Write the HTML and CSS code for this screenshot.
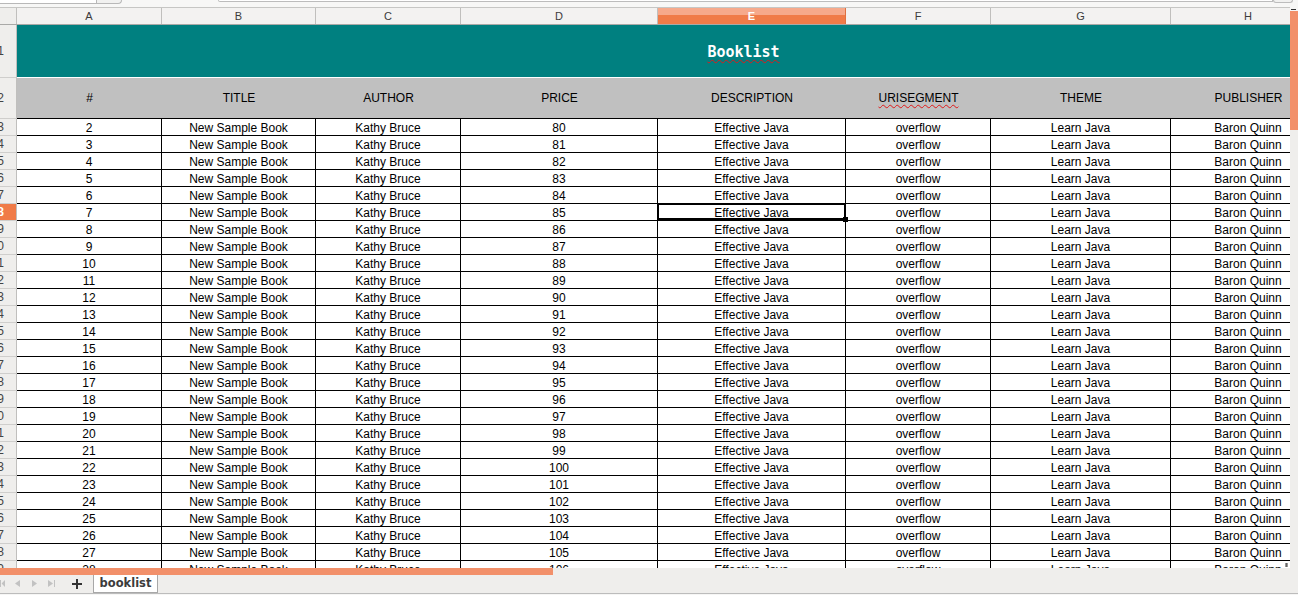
FILE: index.html
```html
<!DOCTYPE html>
<html>
<head>
<meta charset="utf-8">
<title>booklist</title>
<link rel="stylesheet" href="styles.css">
</head>
<body>
<div class="app">
  <div class="strip">
    <div class="namebox"></div>
    <div class="namebtn"></div>
    <div class="strip-gap"></div>
    <div class="formula"></div>
    <div class="formbtn"></div>
  </div>
  <div class="sheet">
    <div class="viewport">
      <div class="grid">
        <div class="colhead">
          <div class="corner"></div>
          <div class="ch wa">A</div>
          <div class="ch wb">B</div>
          <div class="ch wc">C</div>
          <div class="ch wd">D</div>
          <div class="ch we sel">E</div>
          <div class="ch wf">F</div>
          <div class="ch wg">G</div>
          <div class="ch wh">H</div>
          <div class="ch wi">I</div>
        </div>
        <div class="row title-row">
          <div class="rh"><span>1</span></div>
          <div class="title"><span class="spell">Booklist</span></div>
        </div>
        <div class="row head-row">
          <div class="rh"><span>2</span></div>
          <div class="hc wa">#</div>
          <div class="hc wb">TITLE</div>
          <div class="hc wc">AUTHOR</div>
          <div class="hc wd">PRICE</div>
          <div class="hc we">DESCRIPTION</div>
          <div class="hc wf"><span class="spell">URISEGMENT</span></div>
          <div class="hc wg">THEME</div>
          <div class="hc wh">PUBLISHER</div>
          <div class="hc wi"></div>
        </div>
        <div class="row"><div class="rh"><span>3</span></div><div class="c wa">2</div><div class="c wb">New Sample Book</div><div class="c wc">Kathy Bruce</div><div class="c wd">80</div><div class="c we">Effective Java</div><div class="c wf">overflow</div><div class="c wg">Learn Java</div><div class="c wh">Baron Quinn</div></div>
        <div class="row"><div class="rh"><span>4</span></div><div class="c wa">3</div><div class="c wb">New Sample Book</div><div class="c wc">Kathy Bruce</div><div class="c wd">81</div><div class="c we">Effective Java</div><div class="c wf">overflow</div><div class="c wg">Learn Java</div><div class="c wh">Baron Quinn</div></div>
        <div class="row"><div class="rh"><span>5</span></div><div class="c wa">4</div><div class="c wb">New Sample Book</div><div class="c wc">Kathy Bruce</div><div class="c wd">82</div><div class="c we">Effective Java</div><div class="c wf">overflow</div><div class="c wg">Learn Java</div><div class="c wh">Baron Quinn</div></div>
        <div class="row"><div class="rh"><span>6</span></div><div class="c wa">5</div><div class="c wb">New Sample Book</div><div class="c wc">Kathy Bruce</div><div class="c wd">83</div><div class="c we">Effective Java</div><div class="c wf">overflow</div><div class="c wg">Learn Java</div><div class="c wh">Baron Quinn</div></div>
        <div class="row"><div class="rh"><span>7</span></div><div class="c wa">6</div><div class="c wb">New Sample Book</div><div class="c wc">Kathy Bruce</div><div class="c wd">84</div><div class="c we">Effective Java</div><div class="c wf">overflow</div><div class="c wg">Learn Java</div><div class="c wh">Baron Quinn</div></div>
        <div class="row"><div class="rh sel"><span>8</span></div><div class="c wa">7</div><div class="c wb">New Sample Book</div><div class="c wc">Kathy Bruce</div><div class="c wd">85</div><div class="c we active">Effective Java<div class="cursor"><div class="handle"></div></div></div><div class="c wf">overflow</div><div class="c wg">Learn Java</div><div class="c wh">Baron Quinn</div></div>
        <div class="row"><div class="rh"><span>9</span></div><div class="c wa">8</div><div class="c wb">New Sample Book</div><div class="c wc">Kathy Bruce</div><div class="c wd">86</div><div class="c we">Effective Java</div><div class="c wf">overflow</div><div class="c wg">Learn Java</div><div class="c wh">Baron Quinn</div></div>
        <div class="row"><div class="rh"><span>10</span></div><div class="c wa">9</div><div class="c wb">New Sample Book</div><div class="c wc">Kathy Bruce</div><div class="c wd">87</div><div class="c we">Effective Java</div><div class="c wf">overflow</div><div class="c wg">Learn Java</div><div class="c wh">Baron Quinn</div></div>
        <div class="row"><div class="rh"><span>11</span></div><div class="c wa">10</div><div class="c wb">New Sample Book</div><div class="c wc">Kathy Bruce</div><div class="c wd">88</div><div class="c we">Effective Java</div><div class="c wf">overflow</div><div class="c wg">Learn Java</div><div class="c wh">Baron Quinn</div></div>
        <div class="row"><div class="rh"><span>12</span></div><div class="c wa">11</div><div class="c wb">New Sample Book</div><div class="c wc">Kathy Bruce</div><div class="c wd">89</div><div class="c we">Effective Java</div><div class="c wf">overflow</div><div class="c wg">Learn Java</div><div class="c wh">Baron Quinn</div></div>
        <div class="row"><div class="rh"><span>13</span></div><div class="c wa">12</div><div class="c wb">New Sample Book</div><div class="c wc">Kathy Bruce</div><div class="c wd">90</div><div class="c we">Effective Java</div><div class="c wf">overflow</div><div class="c wg">Learn Java</div><div class="c wh">Baron Quinn</div></div>
        <div class="row"><div class="rh"><span>14</span></div><div class="c wa">13</div><div class="c wb">New Sample Book</div><div class="c wc">Kathy Bruce</div><div class="c wd">91</div><div class="c we">Effective Java</div><div class="c wf">overflow</div><div class="c wg">Learn Java</div><div class="c wh">Baron Quinn</div></div>
        <div class="row"><div class="rh"><span>15</span></div><div class="c wa">14</div><div class="c wb">New Sample Book</div><div class="c wc">Kathy Bruce</div><div class="c wd">92</div><div class="c we">Effective Java</div><div class="c wf">overflow</div><div class="c wg">Learn Java</div><div class="c wh">Baron Quinn</div></div>
        <div class="row"><div class="rh"><span>16</span></div><div class="c wa">15</div><div class="c wb">New Sample Book</div><div class="c wc">Kathy Bruce</div><div class="c wd">93</div><div class="c we">Effective Java</div><div class="c wf">overflow</div><div class="c wg">Learn Java</div><div class="c wh">Baron Quinn</div></div>
        <div class="row"><div class="rh"><span>17</span></div><div class="c wa">16</div><div class="c wb">New Sample Book</div><div class="c wc">Kathy Bruce</div><div class="c wd">94</div><div class="c we">Effective Java</div><div class="c wf">overflow</div><div class="c wg">Learn Java</div><div class="c wh">Baron Quinn</div></div>
        <div class="row"><div class="rh"><span>18</span></div><div class="c wa">17</div><div class="c wb">New Sample Book</div><div class="c wc">Kathy Bruce</div><div class="c wd">95</div><div class="c we">Effective Java</div><div class="c wf">overflow</div><div class="c wg">Learn Java</div><div class="c wh">Baron Quinn</div></div>
        <div class="row"><div class="rh"><span>19</span></div><div class="c wa">18</div><div class="c wb">New Sample Book</div><div class="c wc">Kathy Bruce</div><div class="c wd">96</div><div class="c we">Effective Java</div><div class="c wf">overflow</div><div class="c wg">Learn Java</div><div class="c wh">Baron Quinn</div></div>
        <div class="row"><div class="rh"><span>20</span></div><div class="c wa">19</div><div class="c wb">New Sample Book</div><div class="c wc">Kathy Bruce</div><div class="c wd">97</div><div class="c we">Effective Java</div><div class="c wf">overflow</div><div class="c wg">Learn Java</div><div class="c wh">Baron Quinn</div></div>
        <div class="row"><div class="rh"><span>21</span></div><div class="c wa">20</div><div class="c wb">New Sample Book</div><div class="c wc">Kathy Bruce</div><div class="c wd">98</div><div class="c we">Effective Java</div><div class="c wf">overflow</div><div class="c wg">Learn Java</div><div class="c wh">Baron Quinn</div></div>
        <div class="row"><div class="rh"><span>22</span></div><div class="c wa">21</div><div class="c wb">New Sample Book</div><div class="c wc">Kathy Bruce</div><div class="c wd">99</div><div class="c we">Effective Java</div><div class="c wf">overflow</div><div class="c wg">Learn Java</div><div class="c wh">Baron Quinn</div></div>
        <div class="row"><div class="rh"><span>23</span></div><div class="c wa">22</div><div class="c wb">New Sample Book</div><div class="c wc">Kathy Bruce</div><div class="c wd">100</div><div class="c we">Effective Java</div><div class="c wf">overflow</div><div class="c wg">Learn Java</div><div class="c wh">Baron Quinn</div></div>
        <div class="row"><div class="rh"><span>24</span></div><div class="c wa">23</div><div class="c wb">New Sample Book</div><div class="c wc">Kathy Bruce</div><div class="c wd">101</div><div class="c we">Effective Java</div><div class="c wf">overflow</div><div class="c wg">Learn Java</div><div class="c wh">Baron Quinn</div></div>
        <div class="row"><div class="rh"><span>25</span></div><div class="c wa">24</div><div class="c wb">New Sample Book</div><div class="c wc">Kathy Bruce</div><div class="c wd">102</div><div class="c we">Effective Java</div><div class="c wf">overflow</div><div class="c wg">Learn Java</div><div class="c wh">Baron Quinn</div></div>
        <div class="row"><div class="rh"><span>26</span></div><div class="c wa">25</div><div class="c wb">New Sample Book</div><div class="c wc">Kathy Bruce</div><div class="c wd">103</div><div class="c we">Effective Java</div><div class="c wf">overflow</div><div class="c wg">Learn Java</div><div class="c wh">Baron Quinn</div></div>
        <div class="row"><div class="rh"><span>27</span></div><div class="c wa">26</div><div class="c wb">New Sample Book</div><div class="c wc">Kathy Bruce</div><div class="c wd">104</div><div class="c we">Effective Java</div><div class="c wf">overflow</div><div class="c wg">Learn Java</div><div class="c wh">Baron Quinn</div></div>
        <div class="row"><div class="rh"><span>28</span></div><div class="c wa">27</div><div class="c wb">New Sample Book</div><div class="c wc">Kathy Bruce</div><div class="c wd">105</div><div class="c we">Effective Java</div><div class="c wf">overflow</div><div class="c wg">Learn Java</div><div class="c wh">Baron Quinn</div></div>
        <div class="row"><div class="rh"><span>29</span></div><div class="c wa">28</div><div class="c wb">New Sample Book</div><div class="c wc">Kathy Bruce</div><div class="c wd">106</div><div class="c we">Effective Java</div><div class="c wf">overflow</div><div class="c wg">Learn Java</div><div class="c wh">Baron Quinn</div></div>
      </div>
    </div>
    <div class="vscroll">
      <div class="vmark"></div>
      <div class="vthumb"></div>
    </div>
    <div class="split"></div>
  </div>
  <div class="hscroll"><div class="hthumb"></div></div>
  <div class="tabbar">
    <svg class="navs" width="93" height="18" viewBox="0 0 93 18">
      <rect x="0" y="5" width="1" height="7" fill="#c2c2c2"/>
      <polygon points="5,5 5,12 1.6,8.5" fill="#c2c2c2"/>
      <polygon points="20,5 20,12 15,8.5" fill="#c2c2c2"/>
      <polygon points="32,5 32,12 37,8.5" fill="#c2c2c2"/>
      <polygon points="48,5 48,12 53,8.5" fill="#c2c2c2"/>
      <rect x="54" y="5" width="1" height="7" fill="#c2c2c2"/>
      <rect x="72" y="8" width="10" height="2" fill="#333"/>
      <rect x="76" y="4" width="2" height="10" fill="#333"/>
    </svg>
    <div class="tab">booklist</div>
  </div>
  <div class="footer"></div>
</div>
</body>
</html>
```
FILE: styles.css
```css
* { box-sizing: border-box; }
html, body { margin: 0; padding: 0; }
body {
  width: 1298px;
  height: 595px;
  overflow: hidden;
  background: #efeeec;
  font-family: "Liberation Sans", Arial, sans-serif;
}
.app { display: flex; flex-direction: column; height: 595px; }

/* top remnant of toolbar */
.strip { height: 7px; flex: none; display: flex; align-items: flex-start; background: #f7f7f6; }
.namebox { width: 96px; height: 4px; background: #fff; border-bottom: 1px solid #b8b8b8; }
.namebtn { width: 26px; height: 4px; background: #f1f1f0; border: 1px solid #b8b8b8; border-top: none; border-bottom-right-radius: 4px; }
.strip-gap { width: 96px; }
.formula { flex: 1; height: 2px; background: #fff; border: 1px solid #bcbcbc; border-top: none; border-bottom-left-radius: 3px; }
.formbtn { width: 20px; height: 3px; background: #f1f1f0; border: 1px solid #bcbcbc; border-top: none; border-bottom-right-radius: 4px; border-bottom-left-radius: 4px; margin-right: 5px; }

.sheet { height: 561px; flex: none; display: flex; position: relative; }
.viewport { width: 1290px; height: 561px; overflow: hidden; background: #fff; flex: none; }
.grid { width: 1470px; }

.wa { width: 145px; }
.wb { width: 154px; }
.wc { width: 145px; }
.wd { width: 197px; }
.we { width: 188px; }
.wf { width: 145px; }
.wg { width: 180px; }
.wh { width: 155px; }
.wi { width: 144px; }

.colhead { display: flex; height: 18px; border-top: 1px solid #c6c6c4; border-bottom: 1px solid #a9a9a7; background: #f3f2f1; }
.corner { width: 17px; flex: none; background: #efeeec; border-right: 1px solid #c0bfbd; }
.ch { flex: none; border-right: 1px solid #c0bfbd; text-align: center; font-size: 11px; line-height: 16px; color: #3b3b3b; }
.ch.sel { background: linear-gradient(#f6a98b 0 7px, #f07b48 7px); color: #fff; font-weight: bold; border-right-color: #e07040; }

.row { display: flex; }
.rh {
  width: 17px; flex: none; height: 17px;
  background: #efeeec;
  border-right: 1px solid #c0bfbd;
  border-bottom: 1px solid #cfcecc;
  display: flex; justify-content: flex-end; align-items: center;
  padding-right: 12px; overflow: hidden;
  font-size: 12px; line-height: 14px; color: #444;
}
.rh span { white-space: nowrap; }
.rh.sel { background: #f07b48; color: #fff; font-weight: bold; }

.title-row .rh { height: 53px; }
.title {
  width: 1453px; flex: none; height: 53px;
  background: #008080; border-bottom: 1px solid #fff;
  color: #fff; font: bold 15px/18px "DejaVu Sans Mono", monospace;
  display: flex; align-items: center; justify-content: center;
  padding-top: 2px;
}
.spell { text-decoration: underline wavy #e01818; text-decoration-thickness: 1px; text-underline-offset: 2px; }

.head-row .rh { height: 41px; }
.hc {
  flex: none; height: 41px;
  background: #c0c0c0; border-bottom: 1px solid #000;
  display: flex; align-items: center; justify-content: center;
  font-size: 12px; line-height: 14px; color: #000;
}

.c {
  flex: none; height: 17px;
  border-right: 1px solid #000; border-bottom: 1px solid #000;
  text-align: center; font-size: 12px; line-height: 14px; padding-top: 2px;
  white-space: nowrap; overflow: visible; color: #000;
}
.c.active { position: relative; }
.cursor { position: absolute; left: -1px; top: -1px; right: -1px; bottom: 0; border: 2px solid #000; z-index: 2; }
.handle { position: absolute; right: -4px; bottom: -4px; width: 5px; height: 5px; background: #000; }

.vscroll { width: 8px; flex: none; background: #efeeec; display: flex; flex-direction: column; }
.vmark { height: 4px; flex: none; padding: 2px 2px 0 1px; background: #f7f7f6; }
.vmark::before { content: ""; display: block; height: 1px; background: #333; }
.vthumb { height: 119px; flex: none; background: #f2906a; }
.split { position: absolute; left: 1285px; top: 556px; width: 3px; height: 4px; background: #666; border-left: 1px solid #999; border-right: 1px solid #999; }

.hscroll { height: 7px; flex: none; background: #efeeec; }
.hthumb { width: 553px; height: 7px; background: #f2906a; }

.tabbar { height: 19px; flex: none; display: flex; align-items: flex-start; border-bottom: 1px solid #bcbcbc; background: #efeeec; }
.navs { flex: none; display: block; }
.tab {
  width: 65px; height: 18px;
  background: #fff; border: 1px solid #a8a8a8; border-top: none;
  font: bold 11.5px/17px "DejaVu Sans", sans-serif; color: #3c3c3c;
  text-align: center;
}
.footer { height: 1px; flex: none; background: #f6f6f5; }
```
